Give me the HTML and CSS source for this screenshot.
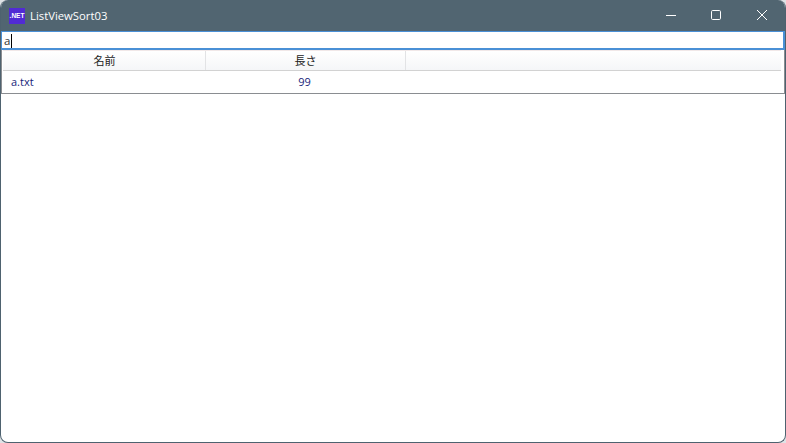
FILE: index.html
```html
<!DOCTYPE html>
<html lang="ja">
<head>
<meta charset="utf-8">
<title>ListViewSort03</title>
<link rel="stylesheet" href="styles.css">
</head>
<body>
<div class="window">
  <header class="titlebar">
    <div class="app-icon">.NET</div>
    <div class="app-title">ListViewSort03</div>
    <div class="controls">
      <div class="control"><svg width="11" height="11" viewBox="0 0 11 11"><path d="M0 5.5H10" stroke="#fff" fill="none"/></svg></div>
      <div class="control"><svg width="11" height="11" viewBox="0 0 11 11"><rect x="0.5" y="0.5" width="9" height="9" rx="1.2" stroke="#fff" fill="none"/></svg></div>
      <div class="control control-close"><svg width="11" height="11" viewBox="0 0 11 11"><path d="M0 0L10 10M10 0L0 10" stroke="#fff" fill="none"/></svg></div>
    </div>
  </header>
  <div class="search"><span class="search-text">a</span><span class="caret"></span></div>
  <div class="list">
    <div class="list-head">
      <div class="col col-name">名前</div>
      <div class="col col-len">長さ</div>
      <div class="col col-rest"></div>
    </div>
    <div class="row">
      <div class="cell-name">a.txt</div>
      <div class="cell-len">99</div>
    </div>
  </div>
</div>
</body>
</html>
```
FILE: styles.css
```css
* { box-sizing: border-box; }
html, body { margin: 0; padding: 0; height: 100%; background: #dfe3e6; overflow: hidden; }
body { font-family: "Open Sans", "Noto Sans CJK JP", sans-serif; }
.window {
  width: 786px; height: 443px; display: flex; flex-direction: column;
  background: #fff; border: 1px solid #4e626f; border-top: 0;
  border-radius: 8px; overflow: hidden;
}
.titlebar {
  height: 31px; flex: none; display: flex; align-items: center;
  background: #516571; padding: 0 1px 0 9px; margin: 0 -1px;
}
.app-icon {
  width: 16px; height: 16px; background: #512bd4; color: #fff;
  font: bold 6.5px/16px "Liberation Sans", sans-serif; text-align: center;
}
.app-title {
  margin-left: 5px; color: #fff; font: 11.3px/16px "Open Sans", sans-serif;
}
.controls { margin-left: auto; display: flex; }
.control { width: 45px; height: 31px; display: flex; align-items: center; justify-content: center; }
.control-close { margin-left: 1px; }
.search {
  height: 19px; flex: none; display: flex; align-items: center;
  border: 2px solid #4a90d6; border-width: 1px 2px 2px 1px; padding: 1px 0 0 2px;
  font: 11.5px/16px "Open Sans", sans-serif; color: #333; background: #fff;
}
.caret { width: 1px; height: 14px; background: #000; margin-left: 1px; }
.list {
  height: 44px; flex: none; border: 1px solid #8a8d91; border-top: 0;
  padding: 0 3px 0 1px; display: flex; flex-direction: column;
}
.list-head {
  height: 21px; flex: none; display: flex;
  background: linear-gradient(#fff, #f5f6f8);
  border-top: 1px solid #f1e8e8; border-bottom: 1px solid #d2d2d2;
}
.col {
  font: 11px/18px "Noto Sans CJK JP", sans-serif; color: #222; text-align: center;
  border-right: 1px solid #e2e3e5;
}
.col-name { width: 203px; padding-left: 1px; }
.col-len { width: 200px; }
.col-rest { flex: 1; border-right: 0; }
.row { flex: 1; display: flex; align-items: center; font: 11px/16px "Open Sans", sans-serif; color: #18257a; }
.cell-name { width: 203px; padding-left: 8px; }
.cell-len { width: 197px; text-align: center; }
```
